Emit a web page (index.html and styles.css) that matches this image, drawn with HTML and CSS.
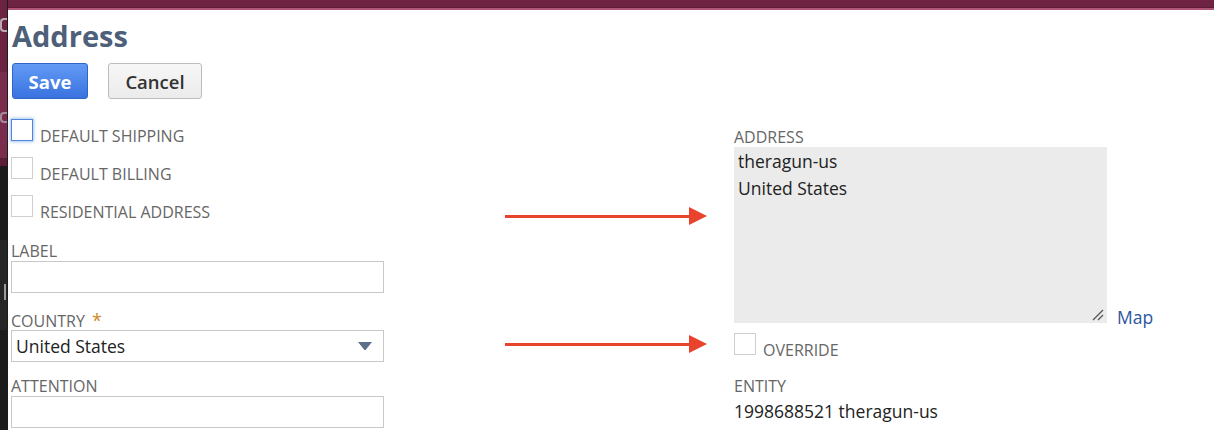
FILE: index.html
```html
<!DOCTYPE html>
<html lang="en">
<head>
    <meta charset="UTF-8">
    <meta name="viewport" content="width=device-width, initial-scale=1.0">
    <title>Address</title>
    <link rel="stylesheet" href="styles.css">
</head>
<body>
    <div class="shell">
        <div class="backdrop">
            <span class="ghost-mark ghost-s"></span>
            <span class="ghost-mark ghost-a"></span>
            <span class="ghost-bar"></span>
        </div>
        <div class="main">
            <div class="topbar"></div>
            <div class="modal">
                <h1 class="title">Address</h1>
                <div class="actions">
                    <button class="btn btn-primary">Save</button>
                    <button class="btn btn-default">Cancel</button>
                </div>

                <div class="form">
                    <div class="col">
                        <label class="check">
                            <span class="box box-focus"></span>
                            <span class="check-label">DEFAULT SHIPPING</span>
                        </label>
                        <label class="check">
                            <span class="box"></span>
                            <span class="check-label">DEFAULT BILLING</span>
                        </label>
                        <label class="check">
                            <span class="box"></span>
                            <span class="check-label">RESIDENTIAL ADDRESS</span>
                        </label>

                        <div class="field">
                            <div class="field-label">LABEL</div>
                            <div class="input"></div>
                        </div>
                        <div class="field">
                            <div class="field-label field-label-req">COUNTRY <span class="req">*</span></div>
                            <div class="input select">
                                <span>United States</span>
                                <svg class="caret" width="14" height="9" viewBox="0 0 14 9">
                                    <path d="M0 0 H14 L8 7.5 Q7 8.5 6 7.5 Z" fill="#5d6f8a"/>
                                </svg>
                            </div>
                        </div>
                        <div class="field">
                            <div class="field-label">ATTENTION</div>
                            <div class="input"></div>
                        </div>
                    </div>

                    <div class="col col-right">
                        <div class="field">
                            <div class="field-label">ADDRESS</div>
                            <div class="address-row">
                                <div class="textarea">
                                    theragun-us<br>United States
                                    <svg class="grip" width="12" height="12" viewBox="0 0 12 12">
                                        <path d="M11 1 L1 11 M11 6 L6 11" stroke="#555" stroke-width="1.3"/>
                                    </svg>
                                </div>
                                <a class="map-link" href="#">Map</a>
                            </div>
                        </div>
                        <label class="check check-override">
                            <span class="box"></span>
                            <span class="check-label">OVERRIDE</span>
                        </label>
                        <div class="field">
                            <div class="field-label field-label-tight">ENTITY</div>
                            <div class="value">1998688521 theragun-us</div>
                        </div>
                    </div>
                </div>

                <!-- annotation arrows -->
                <div class="arrow arrow-one"></div>
                <div class="arrow arrow-two"></div>
            </div>
        </div>
    </div>
</body>
</html>
```

FILE: styles.css
```css
body {
    margin: 0;
    padding: 0;
    font-family: "Open Sans", "Liberation Sans", sans-serif;
    background-color: #fff;
    overflow: hidden;
}

.shell {
    display: flex;
    height: 430px;
    overflow: hidden;
}

.backdrop {
    position: relative;
    width: 7px;
    flex-shrink: 0;
    overflow: hidden;
    border-right: 1px solid #1c1c1c;
    background: linear-gradient(to bottom,
        #6b2341 0, #6b2341 72px,
        #7a2c4d 72px, #7a2c4d 158px,
        #5a1d35 158px, #5a1d35 166px,
        #1b1b1b 166px, #1b1b1b 240px,
        #262626 240px, #262626 330px,
        #1b1b1b 330px);
}

/* partial letters of the page behind the dialog */
.ghost-mark {
    position: absolute;
    left: 0;
    width: 5px;
    border: 2px solid #b9a9b0;
    border-right: none;
    border-radius: 4px 0 0 4px;
}

.ghost-s {
    top: 18px;
    height: 10px;
}

.ghost-a {
    top: 112px;
    height: 7px;
    border-color: #a58b97;
}

.ghost-bar {
    position: absolute;
    left: 4px;
    top: 284px;
    width: 2px;
    height: 16px;
    background-color: #9a9a9a;
}

.main {
    flex: 1;
    display: flex;
    flex-direction: column;
}

.topbar {
    height: 7px;
    flex-shrink: 0;
    background-color: #6e2342;
    border-bottom: 1px solid #5e1b36;
}

.modal {
    position: relative;
    flex: 1;
    border-top: 2px solid #b0577a;
    background-color: #fff;
    padding: 0 0 0 3px;
}

.title {
    margin: 7px 0 0 1px;
    font-size: 29px;
    font-weight: 700;
    line-height: 38px;
    color: #4d5f79;
}

.actions {
    display: flex;
    gap: 20px;
    margin-top: 8px;
    margin-left: 1px;
}

.btn {
    height: 36px;
    padding: 0;
    font-family: inherit;
    font-size: 18.5px;
    border-radius: 3px;
    cursor: pointer;
}

.btn-primary {
    width: 76px;
    font-weight: 700;
    color: #fff;
    border: 1px solid #2f65c6;
    background: linear-gradient(to bottom, #629bf5, #3a72e0);
}

.btn-default {
    width: 94px;
    font-weight: 600;
    color: #333;
    border: 1px solid #bcbcbc;
    background: linear-gradient(to bottom, #f7f7f7, #ebebeb);
}

.form {
    display: grid;
    grid-template-columns: 373px 373px;
    column-gap: 350px;
    margin-top: 20px;
}

.col {
    display: flex;
    flex-direction: column;
}

.check {
    display: flex;
    align-items: flex-start;
    gap: 7px;
    height: 22px;
    margin-bottom: 16px;
}

.box {
    width: 20px;
    height: 20px;
    border: 1px solid #cfcfcf;
    background-color: #fff;
}

.box-focus {
    border-color: #4f86d9;
    box-shadow: 0 0 3px 1px #a9c6f0;
}

.check-label {
    font-size: 16px;
    line-height: 22px;
    color: #666;
    padding-top: 6px;
}

.field {
    display: flex;
    flex-direction: column;
}

.field-label {
    height: 19px;
    padding-top: 4px;
    font-size: 16px;
    line-height: 19px;
    color: #666;
}

.field-label-req {
    padding-top: 7px;
}

.field-label-tight {
    height: 23px;
    padding-top: 0;
}

.req {
    color: #d08a28;
    font-size: 18px;
    line-height: 1;
    margin-left: 3px;
}

.col > .check + .field {
    margin-top: 5px;
}

.input {
    box-sizing: border-box;
    height: 32px;
    border: 1px solid #c8c8c8;
    background-color: #fff;
    margin-bottom: 11px;
}

.select {
    display: flex;
    align-items: center;
    justify-content: space-between;
    padding: 0 11px 0 4px;
    font-size: 17.5px;
    color: #222;
}

.caret {
    margin-top: 1px;
}

.col-right {
    padding-top: 5px;
}

.address-row {
    display: flex;
    align-items: flex-end;
    width: 440px;
}

.textarea {
    position: relative;
    box-sizing: border-box;
    width: 373px;
    height: 176px;
    padding: 1px 4px;
    background-color: #ebebeb;
    font-size: 17.5px;
    line-height: 27px;
    color: #222;
}

.grip {
    position: absolute;
    right: 3px;
    bottom: 2px;
}

.map-link {
    margin-left: 10px;
    margin-bottom: -6px;
    font-size: 17.5px;
    color: #2a56a0;
    text-decoration: none;
}

.col-right > .check-override {
    margin-top: 10px;
    margin-bottom: 17px;
}

.value {
    font-size: 17.5px;
    color: #222;
    line-height: 22px;
}

.arrow {
    position: absolute;
    left: 497px;
    width: 185px;
    height: 3px;
    background-color: #e8432c;
}

.arrow::after {
    content: "";
    position: absolute;
    right: -17px;
    top: -8px;
    border-left: 18px solid #e8432c;
    border-top: 9.5px solid transparent;
    border-bottom: 9.5px solid transparent;
}

.arrow-one {
    top: 205px;
}

.arrow-two {
    top: 333px;
}
```
